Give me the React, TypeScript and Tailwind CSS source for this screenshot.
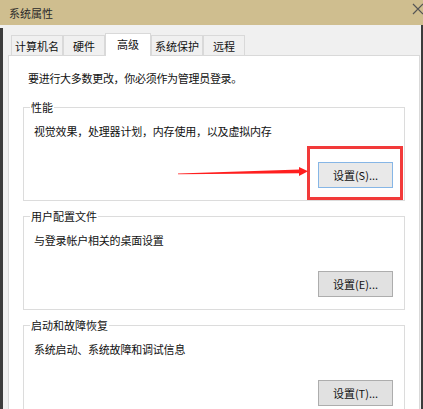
import React from "react";

const font = { fontFamily: '"Noto Sans CJK SC", "Noto Sans", sans-serif' };

function Tab({ label, w, selected }: { label: string; w: string; selected?: boolean }) {
  if (selected) {
    return (
      <div
        className={`${w} h-[23px] mb-[-1px] relative z-10 bg-white border border-b-0 border-[#d9d9d9] flex items-start justify-center pt-[2px] text-[11px] leading-[16px] text-[#111]`}
      >
        {label}
      </div>
    );
  }
  return (
    <div
      className={`${w} h-[20px] bg-[#f0f0f0] border border-b-0 border-[#d9d9d9] flex items-start justify-center pt-[2px] text-[11px] leading-[16px] text-[#111]`}
    >
      {label}
    </div>
  );
}

function Group({
  title,
  text,
  button,
  focused,
  className,
}: {
  title: string;
  text: string;
  button: string;
  focused?: boolean;
  className?: string;
}) {
  return (
    <fieldset className={`border border-[#dcdcdc] mx-[14px] ${className ?? ""}`}>
      <legend className="ml-[6px] px-[1px] text-[11px] leading-[16px] text-[#111]">{title}</legend>
      <div className="pl-[10px] mt-[8px] text-[11px] leading-[16px] tracking-[-0.2px] text-[#111]">{text}</div>
      <div className="flex justify-end pr-[11px] mt-[23px] pb-[12px]">
        <div
          className={
            focused
              ? "w-[75px] h-[26px] border border-[#86b6e6] bg-[#e9e9e9] flex items-center justify-center text-[11px] text-[#111]"
              : "w-[75px] h-[26px] border border-[#adadad] bg-[#e1e1e1] flex items-center justify-center text-[11px] text-[#111]"
          }
        >
          {button}
        </div>
      </div>
    </fieldset>
  );
}

export default function App() {
  return (
    <div className="w-[423px] h-[409px] overflow-hidden relative flex flex-col bg-[#f0f0f0]" style={font}>
      {/* title bar */}
      <div className="h-[25px] bg-[#cfbe8f] flex items-center justify-between pl-[9px] shrink-0">
        <span className="text-[11px] leading-[16px] text-[#2a2a2a]">系统属性</span>
        <svg width="12" height="12" viewBox="0 0 12 12" className="mr-[-1px] mb-[8px]">
          <path d="M1 1 L11 11 M11 1 L1 11" stroke="#555" strokeWidth="1.2" />
        </svg>
      </div>
      <div className="flex-1 flex min-h-0">
        <div className="w-[3px] bg-[#3c3c3c] mt-[3px]" />
        <div className="flex-1 flex flex-col pl-[5px] pr-[1px] pt-[8px] min-h-0">
          <div className="flex items-end pl-[3px]">
            <Tab label="计算机名" w="w-[52px]" />
            <Tab label="硬件" w="w-[42px]" />
            <Tab label="高级" w="w-[46px]" selected />
            <Tab label="系统保护" w="w-[52px]" />
            <Tab label="远程" w="w-[42px]" />
          </div>
          <div className="flex-1 bg-white border border-[#d9d9d9] border-b-0 flex flex-col">
            <div className="pl-[19px] pt-[14px] text-[11px] leading-[16px] tracking-[-0.3px] text-[#111]">
              要进行大多数更改，你必须作为管理员登录。
            </div>
            <Group
              className="mt-[13px]"
              title="性能"
              text="视觉效果，处理器计划，内存使用，以及虚拟内存"
              button="设置(S)..."
              focused
            />
            <Group
              className="mt-[7px]"
              title="用户配置文件"
              text="与登录帐户相关的桌面设置"
              button="设置(E)..."
            />
            <Group
              className="mt-[7px]"
              title="启动和故障恢复"
              text="系统启动、系统故障和调试信息"
              button="设置(T)..."
            />
          </div>
        </div>
        <div className="w-[2px] bg-[#3c3c3c]" />
      </div>

      {/* annotation: red box */}
      <div className="absolute left-[307px] top-[146px] w-[96px] h-[54px] border-[3px] border-[#f23a3a]" />
      {/* annotation: arrow */}
      <svg className="absolute left-0 top-0" width="423" height="409" viewBox="0 0 423 409">
        <polygon points="178,173.6 300,169.6 300,173.2 178,174.2" fill="#ff1f1f" />
        <polygon points="299,167 308,171.3 299,176" fill="#ff1f1f" />
      </svg>
    </div>
  );
}
